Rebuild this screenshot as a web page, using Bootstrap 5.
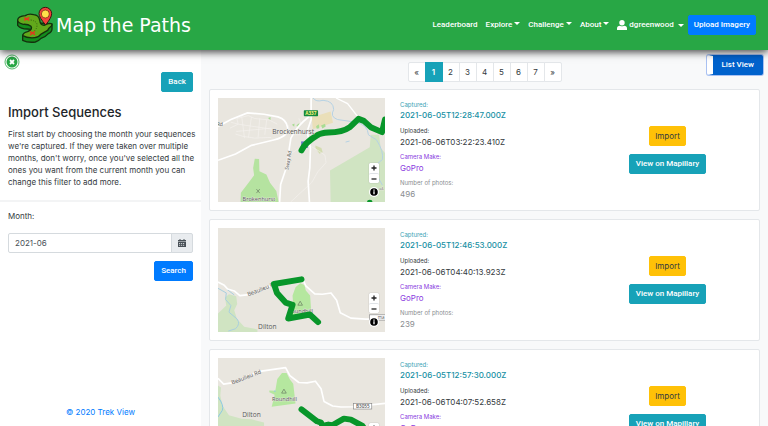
<!DOCTYPE html>
<html lang="en">
<head>
<meta charset="utf-8">
<meta name="viewport" content="width=device-width, initial-scale=1">
<title>Import Sequences - Map the Paths</title>
<link href="https://cdn.jsdelivr.net/npm/bootstrap@5.3.0/dist/css/bootstrap.min.css" rel="stylesheet">
<style>
  html { scrollbar-width: none; }
  body { font-family: Inter, "Liberation Sans", sans-serif; font-size: 8px; line-height: 12px; color: #343a40; background: #f8f9fa; }
  .topbar { min-height: 50px; padding: 0 12px 0 16px; background: #28a745; box-shadow: 0 2px 8px rgba(0,0,0,.75); z-index: 1030; }
  .brand { font-family: "DejaVu Sans", sans-serif; font-size: 19px; line-height: 24px; gap: 2px; color: #fff; }
  .topbar .nav-link { padding: 4px; color: #fff; font-family: Roboto, sans-serif; font-size: 8px; font-weight: 500; }
  .topbar .dropdown-toggle::after { margin-left: 2px; vertical-align: 2px; border-width: 3px 3px 0; }
  .topbar .user-link { gap: 2px; }
  .btn { --bs-btn-font-family: Roboto, sans-serif; --bs-btn-font-size: 8px; --bs-btn-line-height: 12px; --bs-btn-padding-x: 5px; --bs-btn-padding-y: 3px; --bs-btn-border-radius: 2px; --bs-btn-font-weight: 500; }
  .btn-blue { --bs-btn-bg: #007bff; --bs-btn-color: #fff; --bs-btn-border-color: #007bff; }
  .btn-teal { --bs-btn-bg: #17a2b8; --bs-btn-color: #fff; --bs-btn-border-color: #17a2b8; }
  .btn-amber { --bs-btn-bg: #ffc107; --bs-btn-color: #343a40; --bs-btn-border-color: #ffc107; --bs-btn-font-family: Inter, sans-serif; --bs-btn-font-weight: 400; }
  .side .btn, .seq .btn-teal { --bs-btn-padding-x: 6px; }
  .side { flex: 0 0 201px; top: 50px; height: calc(100vh - 50px); padding: 4px 0 8px; background: #fff; }
  .side h1 { font-size: 13px; line-height: 20px; font-weight: 500; color: #212529; margin: 10px 0 6px; }
  .back-row { padding: 2px 8px 0; }
  .intro { padding: 0 2px 12px 8px; border-bottom: 2px solid #f3f4f5; margin-bottom: 8px; }
  .month-label { margin-bottom: 11px; }
  .close-panel { line-height: 0; }
  .side .form-control, .side .input-group-text { font-size: 8px; line-height: 12px; padding: 3px 6px; border-radius: 2px; border-color: #d5dade; color: #495057; min-height: 0; }
  .side .input-group-text { background: #e9ecef; }
  .side footer a { color: #007bff; }
  .pager { --bs-pagination-font-size: 8px; --bs-pagination-padding-x: 0; --bs-pagination-padding-y: 3px; --bs-pagination-color: #343a40; --bs-pagination-active-bg: #17a2b8; --bs-pagination-active-border-color: #17a2b8; --bs-pagination-border-radius: 2px; --bs-pagination-border-color: #e4e7ea; }
  .pager .page-link { min-width: 18px; line-height: 12px; text-align: center; }
  .pager .active .page-link { font-weight: 600; }
  .list-head { padding: 5px 5px 7px; }
  .list-head nav { padding-top: 7px; }
  .toggle-view { --bs-btn-bg: #0062cc; --bs-btn-color: #fff; --bs-btn-border-color: #0062cc; --bs-btn-padding-x: 8px; border-left: 6px solid #fff; box-shadow: 0 0 0 1px #a9c1f2; }
  .seq { border-radius: 2px; border-color: #e4e7ea; }
  .map-box { height: 104px; background: #e9e6df; }
  .map-box svg { font-family: "Open Sans", sans-serif; }
  .map-tools { right: 6px; bottom: 5px; gap: 4px; }
  .zoom-set { border-radius: 2px; box-shadow: 0 0 1px #777; }
  .map-btn { width: 10px; height: 10px; padding: 0; border: 0; background: #fff; color: #111; line-height: 0; border-radius: 2px; }
  .map-btn.info { border-radius: 50%; }
  .facts { padding: 2px 7px; }
  .facts dt { font-size: 6px; line-height: 10px; font-weight: 400; }
  .facts dd { margin: 0 0 4px; font-size: 8px; line-height: 12px; }
  .facts a { color: #1790a4; font-weight: 500; }
  .facts .captured { line-height: 10px; margin-bottom: 6px; }
  .tone-teal { color: #3aa3b5; }
  .tone-violet { color: #8a3ce0; }
  .tone-grey { color: #8a8d90; }
</style>
</head>
<body>
<header class="topbar sticky-top d-flex align-items-center justify-content-between">
  <a href="#" class="brand d-flex align-items-center text-decoration-none">
    <svg width="38" height="38" viewBox="48 19 114 114" aria-hidden="true">
      <g stroke="#14310d" stroke-width="4" stroke-linejoin="round">
        <path fill="#138b1c" d="M53 62V77Q62 88 82 88L93 89Q85 99 68 107V122Q84 130 106 127Q116 124 123 116Q137 112 145 102Q156 97 156 88V73L120 70Z"/>
        <path fill="#62a81b" d="M53 61Q54 50 76 48Q86 41 101 45Q116 46 119 61Q121 77 132 77Q140 72 149 71Q159 71 154 79Q147 84 143 92Q132 98 122 104Q116 113 104 114Q82 116 68 108Q69 99 83 96Q99 89 93 80Q84 73 70 74Q53 70 53 61Z"/>
      </g>
      <path d="M92 61Q111 64 111 76T103 94" fill="none" stroke="#3a5f10" stroke-width="3" stroke-dasharray="3 4"/>
      <path d="M73 54l15 8M88 53l-15 9M90 96l15 9M105 95l-15 11" stroke="#e5341f" stroke-width="4"/>
      <path d="M137 76Q117 53 117 42A19 19 0 0 1 155 42Q155 54 137 76Z" fill="#f3423b" stroke="#3a1410" stroke-width="3"/>
      <circle cx="136" cy="43" r="12" fill="#ffe14a" stroke="#6b1712" stroke-width="2"/>
    </svg>
    <span>Map the Paths</span>
  </a>
  <nav class="d-flex align-items-center" aria-label="Main">
    <a class="nav-link" href="#">Leaderboard</a>
    <a class="nav-link dropdown-toggle" href="#">Explore</a>
    <a class="nav-link dropdown-toggle" href="#">Challenge</a>
    <a class="nav-link dropdown-toggle" href="#">About</a>
    <a class="nav-link dropdown-toggle user-link d-flex align-items-center" href="#">
      <svg width="10" height="10" viewBox="0 0 10 10" fill="#fff" aria-hidden="true"><circle cx="5" cy="2.7" r="2.7"/><path d="M0 10V8.500Q0 6 3 5.800Q5 6.800 7 5.800Q10 6 10 8.500V10Z"/></svg>dgreenwood</a>
    <a class="btn btn-blue" href="#">Upload Imagery</a>
  </nav>
</header>

<div class="d-flex align-items-start">
  <aside class="side sticky-top d-flex flex-column z-0">
    <div class="d-flex px-1">
      <button type="button" class="close-panel btn p-0 border-0" aria-label="Close panel">
        <svg width="16" height="16" viewBox="0 0 16 16" aria-hidden="true"><circle cx="8" cy="8" r="7" fill="#fff" stroke="#28a745" stroke-width=".8"/><circle cx="8" cy="8" r="5.500" fill="#28a745"/><path d="M6 6l4 4M10 6l-4 4" stroke="#fff" stroke-width="1.800"/></svg>
      </button>
    </div>
    <div class="back-row text-end"><a class="btn btn-teal" href="#">Back</a></div>
    <div class="intro">
      <h1>Import Sequences</h1>
      <p class="mb-0">First start by choosing the month your sequences we're captured. If they were taken over multiple months, don't worry, once you've selected all the ones you want from the current month you can change this filter to add more.</p>
    </div>
    <form class="px-2">
      <label for="month" class="month-label d-block">Month:</label>
      <div class="input-group mb-2">
        <input id="month" class="form-control" type="text" value="2021-06">
        <span class="input-group-text">
          <svg width="8" height="8" viewBox="0 0 8 8" aria-hidden="true"><path d="M0 1h8v1.500H0zM0 3h8v5H0zM1.500 0h1v1h-1zM5.500 0h1v1h-1z" fill="#495057"/><path d="M1 4.500h6M1 6.300h6" stroke="#e9ecef" stroke-width=".8" stroke-dasharray="1.200 .8"/></svg>
        </span>
      </div>
      <div class="text-end"><button type="button" class="btn btn-blue">Search</button></div>
    </form>
    <footer class="mt-auto text-center"><a href="#" class="text-decoration-none">© 2020 Trek View</a></footer>
  </aside>

  <main class="flex-grow-1">
    <div class="list-head d-flex align-items-start">
      <div class="flex-fill w-25"></div>
      <nav aria-label="Pages">
        <ul class="pagination pager mb-0">
          <li class="page-item"><a class="page-link" href="#" aria-label="Previous">«</a></li>
          <li class="page-item active"><a class="page-link" href="#">1</a></li>
          <li class="page-item"><a class="page-link" href="#">2</a></li>
          <li class="page-item"><a class="page-link" href="#">3</a></li>
          <li class="page-item"><a class="page-link" href="#">4</a></li>
          <li class="page-item"><a class="page-link" href="#">5</a></li>
          <li class="page-item"><a class="page-link" href="#">6</a></li>
          <li class="page-item"><a class="page-link" href="#">7</a></li>
          <li class="page-item"><a class="page-link" href="#" aria-label="Next">»</a></li>
        </ul>
      </nav>
      <div class="flex-fill w-25 text-end"><button type="button" class="btn toggle-view">List View</button></div>
    </div>

    <div class="d-flex flex-column gap-2 px-2 pb-2">
      <article class="card seq">
        <div class="row g-0 py-2">
          <div class="col-4 px-2">
            <div class="map-box position-relative overflow-hidden">
              <svg class="w-100 h-100 d-block" viewBox="39 39 504 314" preserveAspectRatio="xMinYMin slice" aria-label="Map of Brockenhurst">
                <path d="M377 258L497 188L500 150H525L530 190L543 205V353H379Z" fill="#d0e4c2"/>
                <path d="M107 353L108 325L130 296L148 272L145 250L150 222L163 223L164 260L185 270L196 295L215 320L222 353Z" fill="#b5e3a0"/>
                <path d="M322 97L379 80L386 114L325 133Z" fill="#eadfb9"/><path d="M333 182l18 8 4 13-10 4-12-17z" fill="#d3dcb0"/>
                <path d="M335 124l8-6 2 12-8 2zM350 122l12-5 2 8-10 6zM190 99l8-3-1 10zM262 120l8-4-1 10zM276 121l8-6 2 8-8 4z" fill="#a9dc93"/>
                <path d="M326 39Q334 52 356 46Q388 48 388 74Q376 96 400 104L455 112Q491 120 493 150L517 165Q540 200 535 225L510 245L523 280L535 302M424 172l12-3" fill="none" stroke="#b5d2e4" stroke-width="3"/>
                <g fill="none" stroke="#f4f2ef" stroke-width="2"><path d="M75 130L100 118L96 101L130 92L150 101L193 105L218 118M92 148L115 155L150 160L200 158M110 90L119 160M140 96L131 158M165 100L160 158M78 112L100 118L215 135M94 140L200 130M186 105L180 150M250 120L262 150L290 150M283 100L289 116M255 210L280 193M315 182L345 200L362 212L365 234L340 262L322 294L258 353"/></g>
                <g fill="none" stroke="#fff" stroke-width="5"><path d="M39 125L78 104L128 84L178 88L220 96Q246 104 249 128Q252 154 210 165L140 182L92 208L39 227"/><path d="M320 39V104L308 140L318 190L316 250L311 290L315 353"/><path d="M315 94Q275 125 259 160L245 250L228 300L225 353"/><path d="M395 39L430 56L463 98" stroke-width="4"/></g>
                <path d="M290 170h20v20h-20z" fill="#6676c4"/>
                <path d="M291 197Q301 174 339 151Q350 144 372 143Q415 143 437 127L463 102L479 108L500 127L534 142L543 104" fill="none" stroke="#08962a" stroke-width="18" stroke-linejoin="round" stroke-linecap="round"/>
                <ellipse cx="497" cy="351" rx="8" ry="5" fill="#08962a"/>
                <rect x="298" y="76" width="43" height="18" rx="2" fill="#148a3c"/><text x="319" y="90" font-size="14" font-weight="700" fill="#fff37a" text-anchor="middle">A337</text>
                <g fill="#555" stroke="#eeece7" stroke-width="2" paint-order="stroke"><text x="203" y="147" font-size="20">Brockenhurst</text><text x="113" y="349" font-size="17">Brokenhurst</text><text x="35" y="123" font-size="15">Rd</text><text font-size="15" transform="translate(251 256) rotate(-80)">Sway Rd</text><text x="526" y="318" font-size="13">ol.</text></g>
                <path d="M155 314l10 12M165 314l-10 12" stroke="#64755e" stroke-width="2"/>
              </svg>
              <div class="map-tools position-absolute d-flex flex-column">
                <div class="zoom-set d-flex flex-column bg-white">
                  <button type="button" class="map-btn" aria-label="Zoom in"><svg width="8" height="8" viewBox="0 0 8 8"><path d="M1.500 4h5M4 1.500v5" stroke="#222" stroke-width="1.300"/></svg></button>
                  <button type="button" class="map-btn border-top" aria-label="Zoom out"><svg width="8" height="8" viewBox="0 0 8 8"><path d="M1.500 4h5" stroke="#222" stroke-width="1.300"/></svg></button>
                </div>
                <button type="button" class="map-btn info" aria-label="Map attribution"><svg width="8" height="8" viewBox="0 0 8 8"><circle cx="4" cy="4" r="3.800"/><path d="M4 3.300v3M4 1.500v1.200" stroke="#fff" stroke-width="1.300" fill="none"/></svg></button>
              </div>
            </div>
          </div>
          <dl class="facts col-4 mb-0">
            <dt class="tone-teal">Captured:</dt><dd class="captured"><a href="#" class="text-decoration-none">2021-06-05T12:28:47.000Z</a></dd>
            <dt>Uploaded:</dt><dd>2021-06-06T03:22:23.410Z</dd>
            <dt class="tone-violet">Camera Make:</dt><dd class="tone-violet">GoPro</dd>
            <dt class="tone-grey">Number of photos:</dt><dd class="tone-grey mb-0">496</dd>
          </dl>
          <div class="col-4 d-flex flex-column align-items-center justify-content-center gap-2">
            <button type="button" class="btn btn-amber">Import</button>
            <a href="#" class="btn btn-teal">View on Mapillary</a>
          </div>
        </div>
      </article>

      <article class="card seq">
        <div class="row g-0 py-2">
          <div class="col-4 px-2">
            <div class="map-box position-relative overflow-hidden">
              <svg class="w-100 h-100 d-block" viewBox="39 36 504 314" preserveAspectRatio="xMinYMin slice" aria-label="Map of Dilton">
                <path d="M39 350V294L64 270L60 246L72 236L94 242L97 265L88 284L96 310L118 334L158 342V350Z" fill="#d0e4c2"/>
                <path d="M264 240L273 215L287 203L300 208L304 225L317 240L321 298L250 306L266 270Z" fill="#b5e79f"/>
                <path d="M39 218L64 232L62 252L78 270L72 290L96 310Q108 325 92 340L70 347M66 221L88 238" fill="none" stroke="#a8cfdf" stroke-width="3"/>
                <path d="M39 199L58 209L68 220L88 226L105 240L126 238L206 208M295 190L304 211L331 235L354 236L380 232L397 254L408 292L440 308L485 311H543" fill="none" stroke="#fff" stroke-width="5" stroke-linejoin="round"/>
                <g fill="#555" stroke="#eeece7" stroke-width="2" paint-order="stroke"><text font-size="17" transform="translate(130 242) rotate(-21)">Beaulieu Rd</text><text x="160" y="341" font-size="20">Dilton</text><text x="250" y="292" font-size="17">Roundhill</text></g>
                <path d="M287 257l-7 12h14z" fill="none" stroke="#64755e" stroke-width="2"/>
                <path d="M291 191L208 205L217 232L243 261L264 268L251 309L316 297L341 320" fill="none" stroke="#08962a" stroke-width="18" stroke-linejoin="round" stroke-linecap="round"/>
                <rect x="496" y="298" width="52" height="16" fill="#fff" stroke="#888" stroke-width="2"/><text x="521" y="312" font-size="14" fill="#555">ma</text>
              </svg>
              <div class="map-tools position-absolute d-flex flex-column">
                <div class="zoom-set d-flex flex-column bg-white">
                  <button type="button" class="map-btn" aria-label="Zoom in"><svg width="8" height="8" viewBox="0 0 8 8"><path d="M1.500 4h5M4 1.500v5" stroke="#222" stroke-width="1.300"/></svg></button>
                  <button type="button" class="map-btn border-top" aria-label="Zoom out"><svg width="8" height="8" viewBox="0 0 8 8"><path d="M1.500 4h5" stroke="#222" stroke-width="1.300"/></svg></button>
                </div>
                <button type="button" class="map-btn info" aria-label="Map attribution"><svg width="8" height="8" viewBox="0 0 8 8"><circle cx="4" cy="4" r="3.800"/><path d="M4 3.300v3M4 1.500v1.200" stroke="#fff" stroke-width="1.300" fill="none"/></svg></button>
              </div>
            </div>
          </div>
          <dl class="facts col-4 mb-0">
            <dt class="tone-teal">Captured:</dt><dd class="captured"><a href="#" class="text-decoration-none">2021-06-05T12:46:53.000Z</a></dd>
            <dt>Uploaded:</dt><dd>2021-06-06T04:40:13.923Z</dd>
            <dt class="tone-violet">Camera Make:</dt><dd class="tone-violet">GoPro</dd>
            <dt class="tone-grey">Number of photos:</dt><dd class="tone-grey mb-0">239</dd>
          </dl>
          <div class="col-4 d-flex flex-column align-items-center justify-content-center gap-2">
            <button type="button" class="btn btn-amber">Import</button>
            <a href="#" class="btn btn-teal">View on Mapillary</a>
          </div>
        </div>
      </article>

      <article class="card seq">
        <div class="row g-0 py-2">
          <div class="col-4 px-2">
            <div class="map-box position-relative overflow-hidden">
              <svg class="w-100 h-100 d-block" viewBox="39 47 504 314" preserveAspectRatio="xMinYMin slice" aria-label="Map of Roundhill">
                <path d="M39 130L48 136L46 160L52 190L72 220L110 230L140 232L178 242V361H39Z" fill="#d0e4c2"/>
                <path d="M201 194L210 158L194 150L194 145L212 146L218 110L232 92L246 92L256 112L266 125L273 184Z" fill="#b5e79f"/>
                <path d="M39 165Q58 190 52 205L39 225M208 147h5" fill="none" stroke="#8cc9e4" stroke-width="3"/>
                <path d="M39 108L56 126L80 122L160 88L243 76L256 100L283 121L308 122L333 117L350 140L359 178L385 192L410 195L448 194L543 184" fill="none" stroke="#fff" stroke-width="5" stroke-linejoin="round"/>
                <g fill="#555" stroke="#eeece7" stroke-width="2" paint-order="stroke"><text font-size="17" transform="translate(82 127) rotate(-21)">Beaulieu Rd</text><text x="112" y="226" font-size="20">Dilton</text><text x="202" y="178" font-size="17">Roundhill</text></g>
                <path d="M238 141l-7 12h14z" fill="none" stroke="#64755e" stroke-width="2"/>
                <path d="M291 202L338 238L350 242L354 252L372 248L384 250L419 230L440 233L475 252L500 285" fill="none" stroke="#08962a" stroke-width="18" stroke-linejoin="round" stroke-linecap="round"/>
                <rect x="448" y="184" width="55" height="17" fill="#fff" stroke="#888" stroke-width="2"/><text x="476" y="198" font-size="14" font-weight="600" fill="#555" text-anchor="middle">B3055</text>
              </svg>
              <div class="map-tools position-absolute d-flex flex-column">
                <div class="zoom-set d-flex flex-column bg-white">
                  <button type="button" class="map-btn" aria-label="Zoom in"><svg width="8" height="8" viewBox="0 0 8 8"><path d="M1.500 4h5M4 1.500v5" stroke="#222" stroke-width="1.300"/></svg></button>
                  <button type="button" class="map-btn border-top" aria-label="Zoom out"><svg width="8" height="8" viewBox="0 0 8 8"><path d="M1.500 4h5" stroke="#222" stroke-width="1.300"/></svg></button>
                </div>
                <button type="button" class="map-btn info" aria-label="Map attribution"><svg width="8" height="8" viewBox="0 0 8 8"><circle cx="4" cy="4" r="3.800"/><path d="M4 3.300v3M4 1.500v1.200" stroke="#fff" stroke-width="1.300" fill="none"/></svg></button>
              </div>
            </div>
          </div>
          <dl class="facts col-4 mb-0">
            <dt class="tone-teal">Captured:</dt><dd class="captured"><a href="#" class="text-decoration-none">2021-06-05T12:57:30.000Z</a></dd>
            <dt>Uploaded:</dt><dd>2021-06-06T04:07:52.658Z</dd>
            <dt class="tone-violet">Camera Make:</dt><dd class="tone-violet">GoPro</dd>
          </dl>
          <div class="col-4 d-flex flex-column align-items-center justify-content-center gap-2">
            <button type="button" class="btn btn-amber">Import</button>
            <a href="#" class="btn btn-teal">View on Mapillary</a>
          </div>
        </div>
      </article>
    </div>
  </main>
</div>
<script src="https://cdn.jsdelivr.net/npm/bootstrap@5.3.0/dist/js/bootstrap.bundle.min.js"></script>
</body>
</html>
